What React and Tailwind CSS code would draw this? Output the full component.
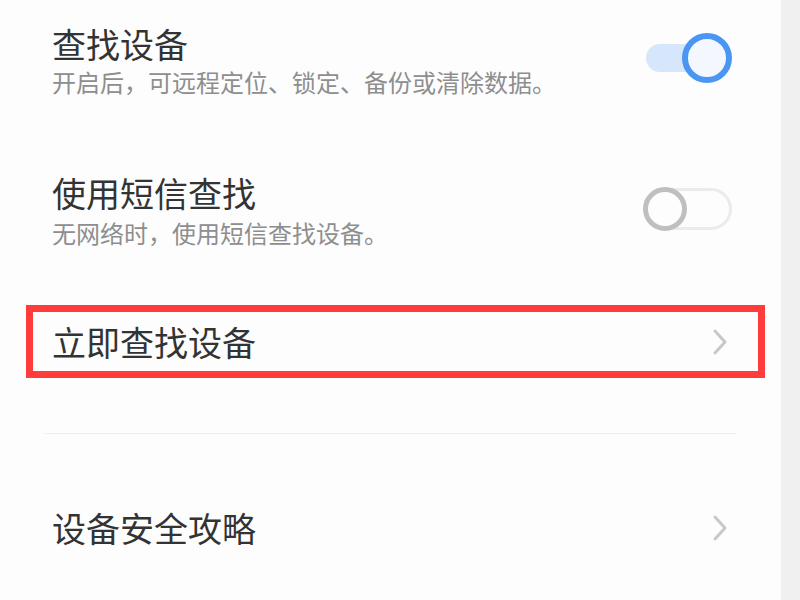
import React from "react";

const font = { fontFamily: '"Noto Sans CJK SC", "Noto Sans", sans-serif' };

function Chevron() {
  return (
    <svg width="16" height="28" viewBox="0 0 16 28" fill="none">
      <polyline
        points="3,3 13,14 3,25"
        stroke="#c8c8c8"
        strokeWidth="3"
        strokeLinecap="round"
        strokeLinejoin="round"
      />
    </svg>
  );
}

function ToggleOn() {
  return (
    <div className="relative w-[86px] h-[50px] shrink-0">
      <div className="absolute left-0 top-[11px] w-[76px] h-[28px] rounded-full bg-[#d6e6fb]" />
      <div className="absolute right-0 top-0 w-[50px] h-[50px] rounded-full border-[6px] border-[#4a96f2] bg-[#f4f8fe]" />
    </div>
  );
}

function ToggleOff() {
  return (
    <div className="relative w-[89px] h-[44px] shrink-0">
      <div className="absolute left-[2px] top-[1px] w-[87px] h-[42px] rounded-full border-[3px] border-[#ebebeb] bg-[#fdfdfd]" />
      <div className="absolute left-0 top-0 w-[44px] h-[44px] rounded-full border-[5px] border-[#bfbfbf] bg-[#fdfdfd]" />
    </div>
  );
}

export default function App() {
  return (
    <div className="w-[800px] h-[600px] flex overflow-hidden bg-[#f0f0f0]" style={font}>
      <div className="w-[781px] h-full bg-[#fdfdfd] flex flex-col">
        {/* 查找设备 */}
        <div className="mt-[24px] pl-[52px] pr-[49px] flex items-center justify-between">
          <div>
            <div className="text-[34px] leading-[40px] text-[#333333]">查找设备</div>
            <div className="mt-[2px] text-[24px] leading-[32px] text-[#8e8e8e]">
              开启后，可远程定位、锁定、备份或清除数据。
            </div>
          </div>
          <div className="-mt-[6px]">
            <ToggleOn />
          </div>
        </div>

        {/* 使用短信查找 */}
        <div className="mt-[75px] pl-[52px] pr-[49px] flex items-center justify-between">
          <div>
            <div className="text-[34px] leading-[40px] text-[#333333]">使用短信查找</div>
            <div className="mt-[4px] text-[24px] leading-[32px] text-[#8e8e8e]">
              无网络时，使用短信查找设备。
            </div>
          </div>
          <div className="-mt-[4px]">
            <ToggleOff />
          </div>
        </div>

        {/* 立即查找设备 (highlighted) */}
        <div className="mt-[56px] ml-[26px] w-[739px] h-[73px] border-[7px] border-[#ff3b3b] flex items-center justify-between pl-[19px] pr-[30px]">
          <div className="text-[34px] leading-[40px] text-[#333333]">立即查找设备</div>
          <Chevron />
        </div>

        <div className="mt-[55px] ml-[44px] w-[692px] h-px bg-[#efefef]" />

        {/* 设备安全攻略 */}
        <div className="mt-[74px] pl-[52px] pr-[53px] flex items-center justify-between">
          <div className="text-[34px] leading-[40px] text-[#333333]">设备安全攻略</div>
          <Chevron />
        </div>
      </div>
      <div className="flex-1" />
    </div>
  );
}
